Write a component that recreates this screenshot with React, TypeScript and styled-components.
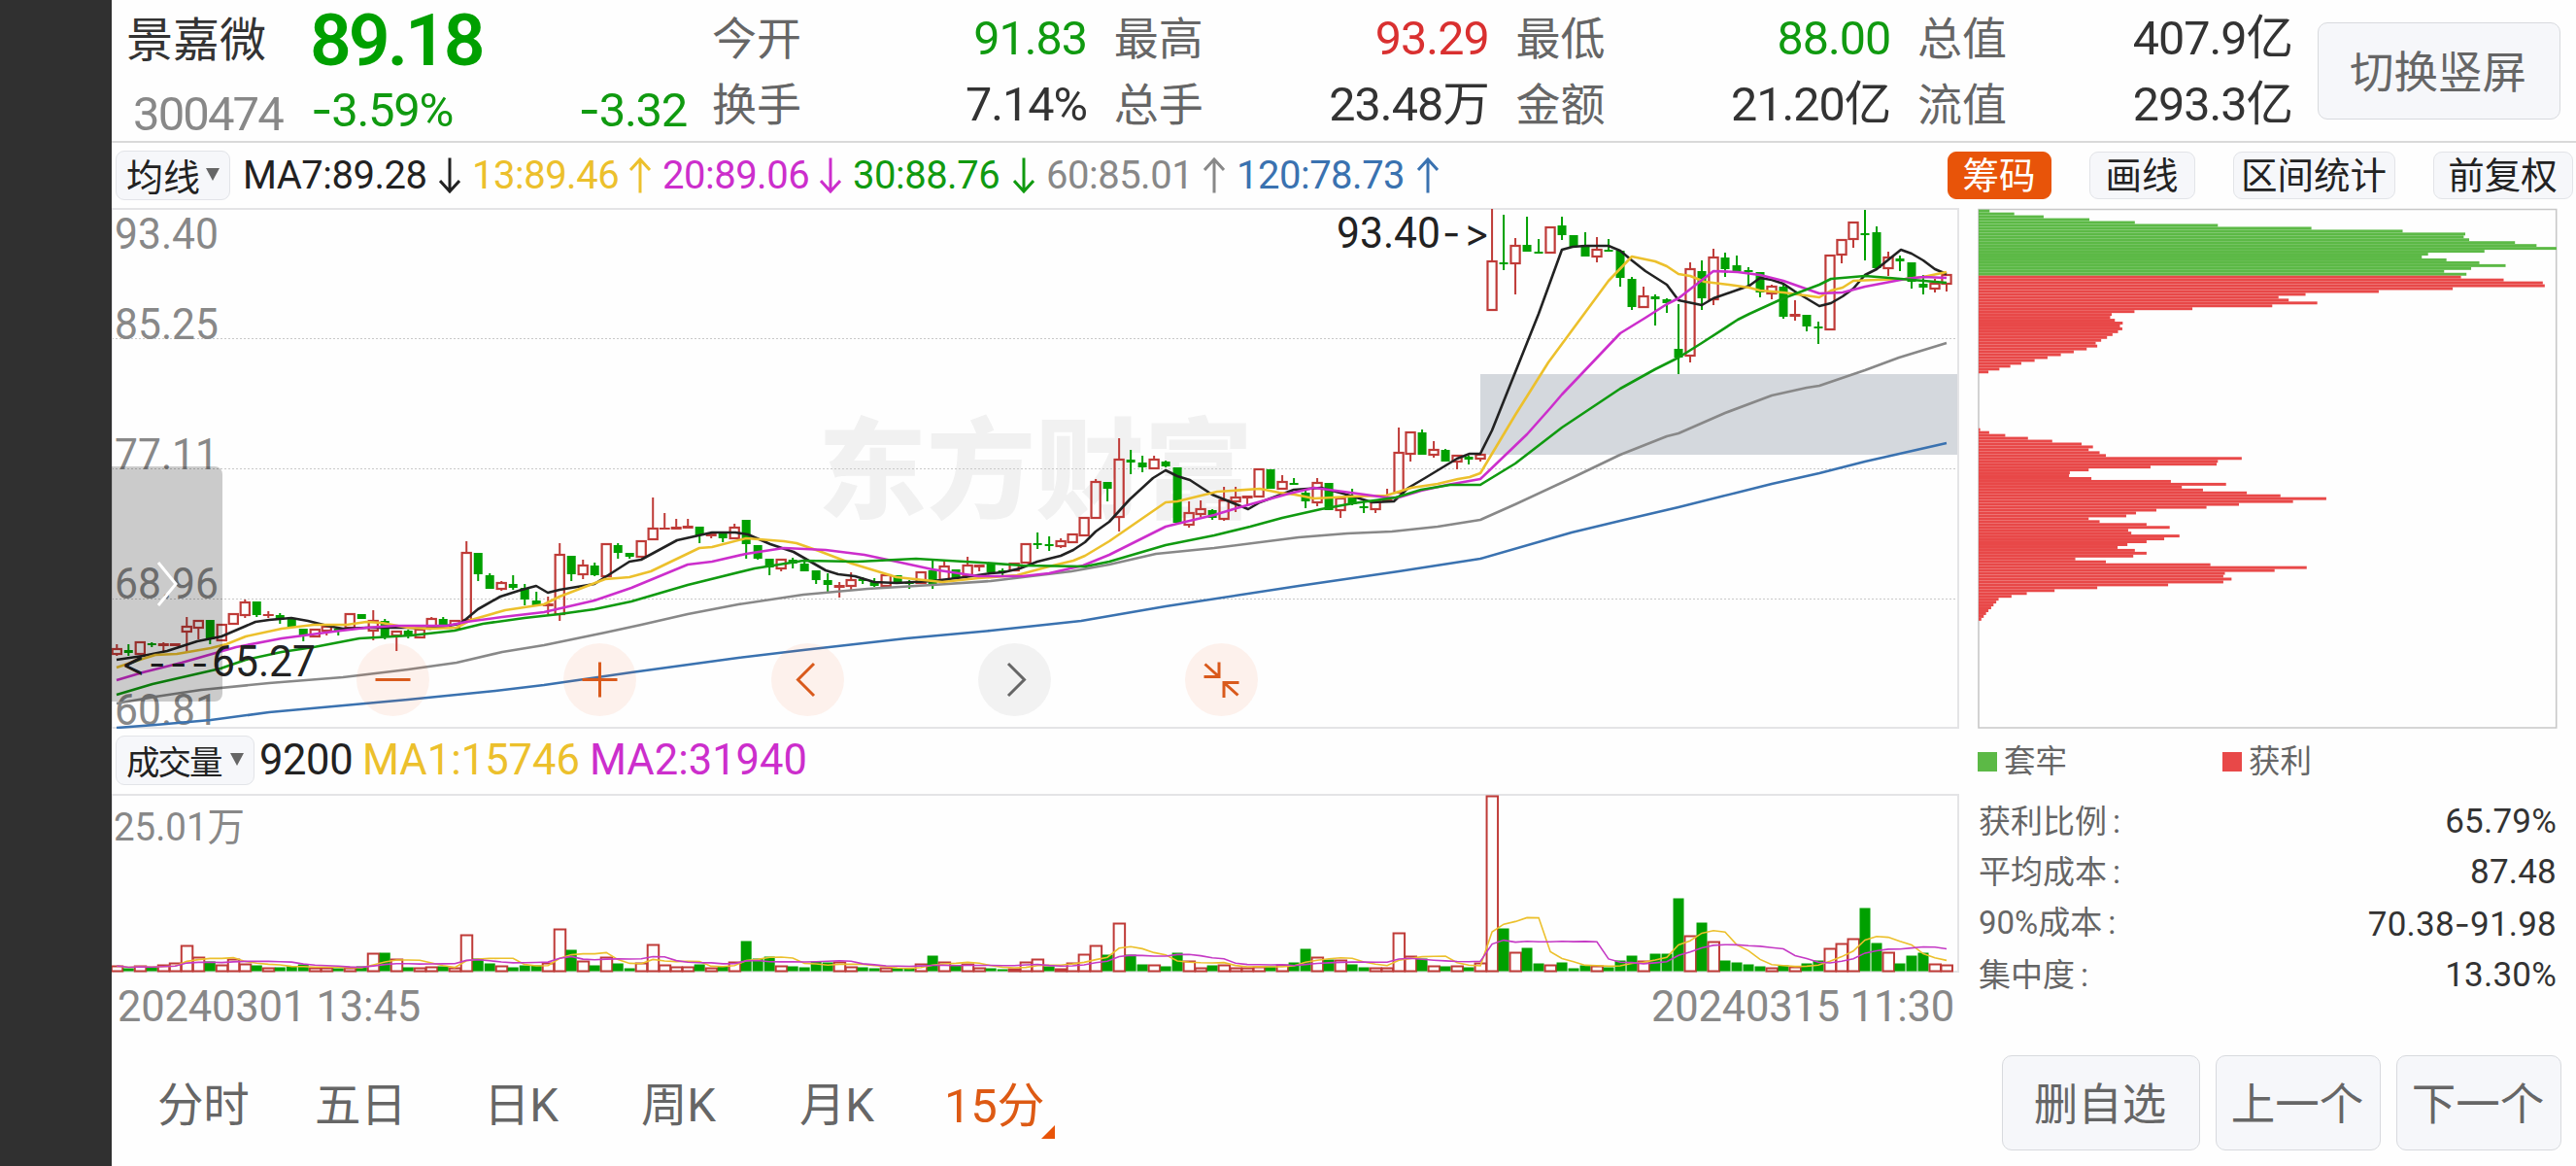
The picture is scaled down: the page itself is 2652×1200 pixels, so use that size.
import React from "react";
import styled, { createGlobalStyle } from "styled-components";

const C = {
  ink: "#222222",
  text: "#333333",
  label: "#666666",
  muted: "#888888",
  up: "#d93030",
  down: "#109a10",
  green: "#00a000",
  red: "#bf3b38",
  yellow: "#ecc02c",
  magenta: "#cc2ecc",
  gray: "#888888",
  blue: "#3a72b0",
  orange: "#e85409",
  chipGreen: "#5cb946",
  chipRed: "#e84848",
  panel: "#f6f7fa",
  line: "#e4e4e6",
};

const Global = createGlobalStyle`
  * { box-sizing: border-box; }
  body { margin: 0; background: #fefefe; }
  button { font: inherit; color: inherit; cursor: pointer; }
`;

const Screen = styled.div`
  display: flex;
  width: 2652px;
  height: 1200px;
  overflow: hidden;
  background: #fefefe;
  color: ${C.text};
  font-family: Roboto, "Noto Sans CJK SC", sans-serif;
  white-space: nowrap;
`;
const Rail = styled.div`
  flex: 0 0 115px;
  background: #303030;
`;
const Main = styled.main`
  flex: 1;
  min-width: 0;
  display: flex;
  flex-direction: column;
`;

/* quote header */
const Header = styled.header`
  display: flex;
  height: 147px;
  padding: 6px 0 0 15px;
  border-bottom: 2px solid #d9d9d9;
`;
const NameCol = styled.div`
  width: 189px;
`;
const StockName = styled.div`
  font-size: 48px;
  line-height: 71px;
`;
const Code = styled.div`
  padding-left: 7px;
  font-size: 49px;
  line-height: 81px;
  letter-spacing: -1.9px;
  color: ${C.muted};
`;
const PriceCol = styled.div`
  width: 388px;
  margin-right: 26px;
  color: ${C.down};
`;
const Price = styled.div`
  height: 71px;
  font-size: 75px;
  font-weight: 600;
  line-height: 71px;
  letter-spacing: -3px;
  color: ${C.green};
`;
const Change = styled.div`
  display: flex;
  justify-content: space-between;
  padding-left: 1px;
  font-size: 49px;
  line-height: 72px;
  letter-spacing: -1.3px;
`;
const StatGrid = styled.div`
  display: grid;
  grid-template-columns: repeat(4, 386px);
  grid-auto-rows: 68px;
  column-gap: 27.7px;
`;
const Stat = styled.div`
  display: flex;
  justify-content: space-between;
  line-height: 68px;
`;
const StatLabel = styled.span`
  font-size: 46px;
  color: ${C.label};
`;
const StatValue = styled.span<{ $c?: string }>`
  font-size: 48.5px;
  letter-spacing: -1px;
  color: ${(p) => p.$c ?? C.text};
`;
const PanelButton = styled.button<{ $w: number; $h: number }>`
  width: ${(p) => p.$w}px;
  height: ${(p) => p.$h}px;
  padding: 0 2px 4px 0;
  border: 1.5px solid #d8dade;
  border-radius: 10px;
  background: ${C.panel};
  color: ${C.label};
  font-size: 45.5px;
`;
const RotateSlot = styled.div`
  padding: 17px 0 0 26px;
`;

/* indicator bars */
const Bar = styled.div<{ $h: number; $size: number; $lift?: number }>`
  display: flex;
  align-items: center;
  height: ${(p) => p.$h}px;
  padding: 0 0 ${(p) => p.$lift ?? 0}px 4px;
  font-size: ${(p) => p.$size}px;
`;
const Picker = styled.button<{ $w: number; $size: number; $ls?: number }>`
  display: flex;
  align-items: center;
  justify-content: space-between;
  width: ${(p) => p.$w}px;
  height: 51px;
  padding: 0 10px 2px;
  border: 1.5px solid #e2e4e8;
  border-radius: 9px;
  background: ${C.panel};
  color: ${C.ink};
  font-size: ${(p) => p.$size}px;
  letter-spacing: ${(p) => p.$ls ?? 0}px;
`;
const Caret = styled.i`
  border: 7.5px solid transparent;
  border-top: 13px solid ${C.label};
  border-bottom: 0;
`;
const Indicator = styled.div<{ $w: number; $c: string; $ls: number }>`
  display: flex;
  align-items: center;
  justify-content: space-between;
  width: ${(p) => p.$w}px;
  color: ${(p) => p.$c};
  letter-spacing: ${(p) => p.$ls}px;
`;
const Indicators = styled.div<{ $gap: number; $ml: number }>`
  display: flex;
  gap: ${(p) => p.$gap}px;
  margin-left: ${(p) => p.$ml}px;
`;
const Tools = styled.div`
  display: flex;
  gap: 39px;
  margin: 0 3px 0 auto;
`;
const Tool = styled.button<{ $w: number; $on?: boolean }>`
  width: ${(p) => p.$w}px;
  height: 49px;
  padding: 0 1px 0 0;
  border: 1.5px solid ${(p) => (p.$on ? C.orange : "#e2e4e8")};
  border-radius: 9px;
  background: ${(p) => (p.$on ? C.orange : C.panel)};
  color: ${(p) => (p.$on ? "#fff" : C.ink)};
  font-size: 37.5px;
  line-height: 42px;
`;

/* body */
const Body = styled.div`
  display: flex;
  height: 854px;
`;
const Charts = styled.section`
  width: 1902px;
`;
const ChartBox = styled.div`
  position: relative;
  height: 536px;
`;
const Canvas = styled.svg`
  display: block;
  text {
    font-family: Roboto, "Noto Sans CJK SC", sans-serif;
  }
`;
const Controls = styled.div`
  position: absolute;
  left: 252px;
  bottom: 13px;
  display: flex;
  gap: 138.3px;
`;
const Round = styled.button<{ $off?: boolean }>`
  width: 75px;
  height: 75px;
  padding: 0;
  border: 0;
  border-radius: 50%;
  background: ${(p) => (p.$off ? "rgba(120,120,120,.09)" : "rgba(240,90,20,.08)")};
  color: ${(p) => (p.$off ? "#666" : "#d95a1c")};
  svg {
    display: block;
  }
`;
const Dates = styled.div`
  display: flex;
  justify-content: space-between;
  padding: 0 5px 0 6px;
  font-size: 43.5px;
  line-height: 69px;
  letter-spacing: -0.2px;
  color: ${C.muted};
`;

/* chip distribution side panel */
const Side = styled.aside`
  width: 600px;
  margin-left: 18px;
`;
const Legend = styled.div`
  display: grid;
  grid-template-columns: 252px 1fr;
  height: 68px;
  padding-left: 1px;
  font-size: 32.5px;
  line-height: 63px;
  color: ${C.label};
`;
const LegendItem = styled.div<{ $c: string }>`
  display: flex;
  align-items: center;
  gap: 7px;
  &::before {
    content: "";
    width: 20px;
    height: 20px;
    background: ${(p) => p.$c};
  }
`;
const Row = styled.div`
  display: flex;
  justify-content: space-between;
  padding: 0 3px 0 2px;
  font-size: 33px;
  line-height: 52px;
  color: ${C.label};
`;
const Rows = styled.div`
  padding-top: 2px;
`;
const RowValue = styled.span`
  color: ${C.text};
  font-size: 35px;
  letter-spacing: 0.2px;
`;
const Colon = styled.span`
  margin-left: 6px;
`;
const Dash = styled.span`
  font-family: Inter, sans-serif;
`;

/* footer */
const Footer = styled.footer`
  flex: 1;
  display: flex;
  justify-content: space-between;
  padding: 18px 15px 0 47px;
`;
const Tabs = styled.nav`
  display: flex;
  height: 94px;
  align-items: center;
`;
const Tab = styled.button<{ $w: number; $on?: boolean }>`
  position: relative;
  width: ${(p) => p.$w}px;
  padding: 0;
  border: 0;
  background: none;
  text-align: left;
  font-size: ${(p) => (p.$on ? 49 : 47.5)}px;
  letter-spacing: -0.3px;
  color: ${(p) => (p.$on ? "#dd5a14" : C.label)};
`;
const Corner = styled.i`
  position: absolute;
  left: 100px;
  bottom: -3px;
  border: 7.5px solid ${C.orange};
  border-top-color: transparent;
  border-left-color: transparent;
`;
const Actions = styled.div`
  display: flex;
  gap: 16px;
`;

/* [direction, high, bodyTop, bodyBottom, low, volumeTop] for each 15-minute bar */
type K = [string, number, number, number, number, number];
const K_DATA = `
r 663 668 673 675 994|g 663 669 672 675 997|r 660 661 673 674 994|g 661 662 664 666 996|r 661 662 665 670 993|r 662 662 665 665 991
r 635 645 650 671 973|r 638 639 646 658 985|g 638 638 658 663 990|r 642 643 659 660 993|r 631 632 642 643 987|r 617 620 633 636 992
g 619 619 633 635 994|r 629 632 634 636 996|g 631 633 637 642 996|g 637 637 645 645 995|g 647 647 654 660 993|r 648 648 655 656 996
r 643 645 649 654 996|g 646 647 649 654 997|r 631 632 646 647 996|g 632 632 637 637 995|r 628 639 649 659 981|g 637 639 656 658 981
r 649 650 654 670 987|g 648 649 655 657 996|r 648 648 656 656 996|r 635 637 646 648 995|g 635 637 643 644 995|r 639 639 646 646 996
r 557 569 638 639 962|g 569 569 591 598 987|g 590 592 606 606 992|r 598 600 606 608 994|g 592 601 605 607 996|g 601 605 617 623 994
g 609 618 623 624 994|r 614 621 624 632 991|r 559 571 632 639 956|g 572 572 591 598 978|r 576 582 591 596 989|g 579 582 592 593 994
r 560 560 593 593 985|g 559 561 569 575 992|g 569 569 573 575 997|r 557 557 573 573 991|r 512 544 555 555 972|r 528 543 545 545 993
r 534 542 545 545 995|r 534 541 544 544 995|g 542 542 551 559 993|r 549 549 552 554 996|g 549 549 554 558 995|r 539 543 554 555 990
g 535 535 560 575 969|g 561 561 575 576 987|g 575 575 584 592 985|r 576 576 585 588 994|g 574 576 580 585 995|g 577 580 588 588 996
g 587 587 597 601 990|g 590 597 602 609 991|r 599 602 605 615 990|r 589 597 603 607 995|g 594 596 598 601 996|g 595 599 603 604 997
r 592 592 603 606 996|g 592 592 600 600 997|g 597 599 601 606 997|r 589 589 600 601 992|g 577 587 602 606 984|r 577 583 597 598 990
g 586 586 595 595 994|r 573 582 592 592 992|r 581 581 584 588 996|g 580 580 589 589 997|g 585 587 589 592 998|r 580 580 587 587 997
r 560 560 579 579 990|g 548 559 561 565 987|g 552 560 562 567 995|r 554 557 562 564 997|r 550 550 558 559 991|r 533 533 551 551 982
r 493 496 533 533 973|g 496 496 503 516 983|r 451 473 532 547 950|g 463 473 476 488 983|g 469 476 481 486 993|r 469 473 482 483 993
g 474 475 480 481 995|g 481 481 538 538 981|r 516 528 540 543 989|r 515 524 529 532 996|g 524 525 533 535 994|r 501 515 534 536 993
r 501 512 516 527 996|r 510 510 513 519 996|r 483 483 511 512 995|g 483 483 503 503 995|r 489 496 503 504 993|g 492 497 499 499 991
g 502 507 516 523 977|r 492 497 517 521 985|g 497 497 525 525 988|r 511 513 525 533 988|g 503 511 519 520 993|g 514 521 523 528 996
r 516 516 524 528 996|r 503 514 517 517 996|r 440 466 507 507 960|r 445 445 467 475 984|g 442 445 468 468 987|r 454 463 468 471 994
g 462 463 475 475 995|r 468 469 475 483 994|g 469 470 473 478 996|r 468 468 472 475 991|r 215 269 319 319 819|g 221 270 271 278 956
r 245 253 271 303 980|g 223 252 259 259 976|g 246 259 260 260 992|r 234 234 260 260 993|g 223 232 242 247 991|g 242 242 254 255 997
g 239 253 264 264 994|r 244 257 264 270 994|g 246 257 258 258 996|g 258 258 286 295 989|g 285 287 316 319 984|r 295 305 316 317 989
g 303 305 308 335 982|g 307 308 312 322 982|g 313 359 368 385 925|r 270 277 366 373 963|g 268 279 307 319 950|r 256 265 308 314 969
g 260 265 277 285 989|g 263 273 279 279 991|g 275 278 280 295 993|g 280 280 301 306 995|r 293 295 302 308 996|g 291 295 326 328 994
r 309 323 326 330 995|g 324 324 336 341 992|g 331 336 338 354 989|r 263 263 339 339 976|r 247 247 262 271 971|r 229 229 246 255 966
g 216 240 241 268 935|g 233 239 276 276 971|r 259 265 276 284 980|g 263 266 269 279 992|g 270 270 290 297 984|g 283 292 296 303 981
r 287 292 297 301 992|r 283 283 292 300 993`;
const bars: K[] = K_DATA.trim()
  .split(/[|\n]/)
  .map((s) => {
    const [d, ...n] = s.trim().split(" ");
    return [d, ...n.map(Number)] as K;
  });
const cx = (i: number) => 120.3 + 11.998 * i;
const BASE = 1000;

const movingAverage = (n: number) =>
  bars
    .map((_, i) => {
      const win = bars.slice(Math.max(0, i - n + 1), i + 1);
      const h = win.reduce((s, b) => s + (BASE - b[5]), 0) / win.length;
      return `${cx(i).toFixed(1)},${(BASE - h).toFixed(1)}`;
    })
    .join(" ");

const MA_LINES: [string, string][] = [
  [C.blue, "120,749 160,746 217,741 277,733 420,720 510,711 560,705 650,692 760,677 827,669 933,657 1020,649 1113,639 1200,624 1337,603 1440,588 1524,575 1618,548 1668,536 1728,522 1824,498 1873,487 1920,475 2004,456"],
  [C.gray, "120,724 160,717 207,710 277,703 353,697 420,689 470,682 517,671 560,664 623,651 660,643 708,632 760,622 827,612 893,606 960,602 1020,598 1103,588 1142,581 1190,570 1250,564 1337,553 1387,549 1433,547 1480,542 1524,535 1560,519 1618,492 1668,468 1716,449 1728,446 1776,425 1824,407 1860,399 1873,397 1920,381 1955,368 2004,353"],
  [C.ink, "120,679 147,675 172,670 203,660 228,655 263,640 277,638 288,637 300,636 317,639 337,644 353,647 377,646 420,646 443,647 473,642 480,637 492,627 515,614 537,607 552,603 564,610 576,607 612,601 648,578 660,576 697,556 733,548 757,548 770,550 793,560 817,568 850,587 863,591 880,593 900,599 923,600 960,598 993,594 1020,590 1033,589 1050,585 1068,578 1092,572 1105,566 1117,558 1128,547 1142,537 1163,514 1187,492 1200,484 1212,490 1225,494 1248,509 1285,524 1297,517 1332,504 1360,502 1383,508 1413,517 1435,516 1450,502 1467,492 1500,472 1513,467 1524,467 1536,443 1584,323 1608,257 1619,254 1632,253 1656,253 1668,258 1680,268 1694,279 1716,293 1728,309 1752,314 1764,307 1801,294 1812,286 1824,288 1836,292 1848,300 1873,315 1885,312 1897,305 1908,297 1920,283 1932,277 1957,257 1968,261 1980,268 1992,277 2004,282"],
  [C.yellow, "120,687 147,678 160,674 182,673 217,667 233,663 253,655 290,647 323,643 357,643 377,640 393,641 420,646 443,647 470,646 485,638 520,628 560,622 576,614 623,596 648,594 670,588 720,564 733,563 768,554 807,557 820,559 843,567 877,580 923,594 970,599 1007,595 1047,592 1080,583 1105,577 1117,572 1142,557 1200,517 1212,516 1253,506 1297,503 1317,507 1333,509 1353,513 1390,511 1427,510 1453,502 1480,498 1501,493 1513,491 1524,487 1536,467 1560,427 1594,373 1656,289 1680,264 1704,269 1716,274 1728,282 1740,284 1755,290 1780,293 1801,296 1812,299 1836,301 1873,306 1885,299 1897,296 1908,289 1932,288 1962,287 1980,285 2004,280"],
  [C.magenta, "120,700 147,692 187,682 243,666 290,657 343,650 377,646 407,644 460,644 480,640 517,635 560,630 612,618 650,605 708,581 733,578 768,570 807,564 850,566 890,571 923,578 960,586 1007,593 1053,593 1080,590 1115,582 1142,571 1200,542 1212,539 1250,530 1273,523 1327,508 1353,502 1383,506 1427,512 1440,512 1463,505 1490,499 1524,493 1572,447 1596,420 1608,406 1668,343 1694,327 1716,313 1728,307 1764,279 1789,280 1812,283 1836,289 1873,302 1897,301 1920,295 1962,287 1980,285 2004,286"],
  [C.down, "120,715 157,704 227,688 253,679 290,671 323,666 370,657 423,654 468,649 497,642 540,636 576,632 612,627 650,619 708,602 777,585 827,577 883,578 943,575 1010,579 1053,582 1117,583 1142,578 1200,561 1250,551 1287,542 1320,533 1360,524 1393,518 1437,512 1463,504 1493,499 1524,499 1560,477 1608,440 1668,400 1704,380 1728,368 1752,353 1789,329 1801,323 1836,307 1873,293 1885,287 1920,284 1945,286 2004,291"],
];

const CHIP_GREEN = [70, 133, 208, 325, 441, 653, 892, 1125, 1285, 1281, 1295, 1412, 1467, 1518, 1334, 1190, 1174, 1237, 1321, 1388, 1300, 1231, 1288];
const CHIP_RED = [1274, 1383, 1483, 1488, 1253, 1064, 877, 808, 834, 907, 792, 588, 440, 382, 378, 390, 410, 403, 409, 398, 384, 370, 355, 341, 345, 318, 285, 252, 218, 185, 151, 123, 95, 67];
const CHIP_LOW = [46, 69, 110, 168, 230, 305, 334, 323, 351, 367, 714, 653, 650, 481, 323, 275, 273, 330, 533, 674, 561, 615, 727, 813, 930, 845, 707, 624, 496, 444, 419, 323, 351, 471, 530, 424, 432, 555, 516, 471, 422, 397, 441, 471, 437, 289, 367, 634, 880, 798, 671, 667, 688, 667, 526, 345, 236, 165, 126, 93, 87, 80, 74, 67, 61, 55, 49];
const CHIP_ORIGIN = 42;
const CHIP_SCALE = 2.481;

function ChipRows({ rows, start, fill }: { rows: number[]; start: number; fill: string }) {
  return (
    <g fill={fill}>
      {rows.map((v, k) => (
        <rect key={k} x={2037} y={215.7 + (start + k) * 2.957} width={(v - CHIP_ORIGIN) / CHIP_SCALE} height={2.957} />
      ))}
    </g>
  );
}

function Arrow({ up }: { up?: boolean }) {
  return (
    <svg width="22" height="37" viewBox="0 0 22 37" fill="none" stroke="currentColor" strokeWidth="3">
      <path d={up ? "M11 36.5V2M1 13 11 2l10 11" : "M11 .5V35M1 24 11 35l10-11"} />
    </svg>
  );
}

function Candle({ i, k }: { i: number; k: K }) {
  const [d, hi, top, bot, lo] = k;
  const x = cx(i);
  if (d === "g") {
    const thin = bot - top <= 2;
    return (
      <g fill={C.green}>
        <rect x={x - 1} y={hi} width={2} height={Math.max(1, lo - hi)} />
        <rect x={x - 4.5} y={top} width={9} height={thin ? 2 : bot - top} />
      </g>
    );
  }
  return (
    <g fill={C.red}>
      {top > hi && <rect x={x - 1} y={hi} width={2} height={top - hi} />}
      {lo > bot && <rect x={x - 1} y={bot} width={2} height={lo - bot} />}
      {bot - top <= 3 ? (
        <rect x={x - 5.5} y={top} width={11} height={bot - top} />
      ) : (
        <rect x={x - 4.6} y={top} width={9.2} height={bot - top} fill="none" stroke={C.red} strokeWidth={2.2} />
      )}
    </g>
  );
}

function PriceChart() {
  const labels: [string, number][] = [["93.40", 256], ["85.25", 349], ["77.11", 483], ["68.96", 616], ["60.81", 746]];
  return (
    <Canvas width="1902" height="536" viewBox="115 214 1902 536">
      <text x="842" y="525" fontSize="112" fontWeight="900" fill="#f1f1f1">东方财富</text>
      <rect x="1524" y="385" width="492" height="83" fill="#d4d8dd" />
      <g stroke="#c9c9c9" strokeWidth="1" strokeDasharray="2 2">
        <path d="M115 348.500H2016M115 482.500H2016M115 616.500H2016" />
      </g>
      <path d="M115 215H2016V749H115Z" fill="none" stroke={C.line} strokeWidth="2" />
      <g fontSize="44" fill={C.gray}>
        {labels.map(([t, y]) => (
          <text key={t} x="118" y={y} textLength="107" lengthAdjust="spacingAndGlyphs">{t}</text>
        ))}
      </g>
      {bars.map((k, i) => <Candle key={i} i={i} k={k} />)}
      <g fill="none" strokeWidth="2.600" strokeLinejoin="round">
        {MA_LINES.map(([c, p]) => <polyline key={c} points={p} stroke={c} />)}
      </g>
      <g fontSize="44" fill={C.ink}>
        <text y="696">
          <tspan fontFamily="Inter" fontSize="38" x="125 153 175 197">&lt;---</tspan>
          <tspan x="218" textLength="107" lengthAdjust="spacingAndGlyphs">65.27</tspan>
        </text>
        <text y="255">
          <tspan x="1376" textLength="107" lengthAdjust="spacingAndGlyphs">93.40</tspan>
          <tspan fontFamily="Inter" fontSize="40" x="1485 1507" y="254">-&gt;</tspan>
        </text>
      </g>
      <path d="M115 480H221a8 8 0 0 1 8 8V714a8 8 0 0 1-8 8H115Z" fill="rgba(0,0,0,.2)" />
      <path d="M163 579l18 22-18 22" fill="none" stroke="#fff" strokeWidth="3" />
    </Canvas>
  );
}

function VolumeChart() {
  return (
    <Canvas width="1902" height="185" viewBox="115 817 1902 185">
      <path d="M115 818H2016V1000H115Z" fill="none" stroke={C.line} strokeWidth="2" />
      <text x="117" y="865" fontSize="40" fill={C.muted} textLength="135" lengthAdjust="spacingAndGlyphs">25.01万</text>
      {bars.map(([d, , , , , top], i) =>
        d === "g" && i !== 79 ? (
          <rect key={i} x={cx(i) - 5.500} y={top - 0.500} width={11} height={BASE - top} fill={C.green} />
        ) : (
          <rect key={i} x={cx(i) - 5.500} y={top + 0.500} width={11.500} height={Math.max(1, BASE - 1 - top)} fill="none" stroke={C.red} strokeWidth={2} />
        ),
      )}
      <polyline points={movingAverage(5)} fill="none" stroke={C.yellow} strokeWidth="1.600" />
      <polyline points={movingAverage(10)} fill="none" stroke="#c53ac5" strokeWidth="1.600" />
    </Canvas>
  );
}

const ICONS: [string, string, boolean?][] = [
  ["缩小", "M19.500 37.500H55.500"],
  ["放大", "M19.500 37.500H55.500M37.500 19.500V55.500"],
  ["左移", "M44 21 27.500 37.500 44 54"],
  ["右移", "M31 21 47.500 37.500 31 54", true],
  ["收起", "M20.500 21.500 35 34.500M35 19.500V34.500H19.500M40 40.500 54.500 53.500M40 56V40.500H55.500"],
];

const STATS: [string, string, string?][] = [
  ["今开", "91.83", C.down], ["最高", "93.29", C.up], ["最低", "88.00", C.down], ["总值", "407.9亿"],
  ["换手", "7.14%"], ["总手", "23.48万"], ["金额", "21.20亿"], ["流值", "293.3亿"],
];
const MAS: [string, string, number, boolean][] = [
  ["MA7:89.28", C.ink, 224, false],
  ["13:89.46", C.yellow, 184, true],
  ["20:89.06", C.magenta, 184, false],
  ["30:88.76", C.down, 187, false],
  ["60:85.01", C.gray, 184, true],
  ["120:78.73", C.blue, 208, true],
];
const CHIP_STATS: [string, string][] = [
  ["获利比例", "65.79%"], ["平均成本", "87.48"], ["90%成本", "70.38-91.98"], ["集中度", "13.30%"],
];
const TABS: [string, number][] = [["分时", 162], ["五日", 174], ["日K", 162], ["周K", 163], ["月K", 149], ["15分", 125]];

/* numbers whose minus sign or range dash is drawn full width */
function Figure({ value }: { value: string }) {
  const parts = value.split("-");
  return (
    <>
      {parts.map((p, i) => (
        <React.Fragment key={i}>{i > 0 && <Dash>-</Dash>}{p}</React.Fragment>
      ))}
    </>
  );
}

export default function App() {
  return (
    <Screen>
      <Global />
      <Rail />
      <Main>
        <Header>
          <NameCol>
            <StockName>景嘉微</StockName>
            <Code>300474</Code>
          </NameCol>
          <PriceCol>
            <Price>89.18</Price>
            <Change>
              <span><Figure value="-3.59%" /></span>
              <span><Figure value="-3.32" /></span>
            </Change>
          </PriceCol>
          <StatGrid>
            {STATS.map(([l, v, c]) => (
              <Stat key={l}>
                <StatLabel>{l}</StatLabel>
                <StatValue $c={c}>{v}</StatValue>
              </Stat>
            ))}
          </StatGrid>
          <RotateSlot><PanelButton $w={250} $h={100}>切换竖屏</PanelButton></RotateSlot>
        </Header>

        <Bar $h={67} $size={40}>
          <Picker $w={118} $size={38}>均线<Caret /></Picker>
          <Indicators $gap={12} $ml={13}>
            {MAS.map(([t, c, w, up]) => (
              <Indicator key={t} $c={c} $w={w} $ls={-0.5}>{t}<Arrow up={up} /></Indicator>
            ))}
          </Indicators>
          <Tools>
            <Tool $w={107} $on>筹码</Tool>
            <Tool $w={109}>画线</Tool>
            <Tool $w={167}>区间统计</Tool>
            <Tool $w={144}>前复权</Tool>
          </Tools>
        </Bar>

        <Body>
          <Charts>
            <ChartBox>
              <PriceChart />
              <Controls>
                {ICONS.map(([name, d, off]) => (
                  <Round key={name} $off={off} aria-label={name}>
                    <svg width="75" height="75" fill="none" stroke="currentColor" strokeWidth="3"><path d={d} /></svg>
                  </Round>
                ))}
              </Controls>
            </ChartBox>
            <Bar $h={67} $size={43.5} $lift={2}>
              <Picker $w={143} $size={34.5} $ls={-2}>成交量<Caret /></Picker>
              <Indicators $gap={10} $ml={5}>
                <Indicator $w={96} $c={C.ink} $ls={-0.4}>9200</Indicator>
                <Indicator $w={224} $c={C.yellow} $ls={0}>MA1:15746</Indicator>
                <Indicator $w={224} $c={C.magenta} $ls={0}>MA2:31940</Indicator>
              </Indicators>
            </Bar>
            <VolumeChart />
            <Dates><span>20240301 13:45</span><span>20240315 11:30</span></Dates>
          </Charts>

          <Side>
            <Canvas width="600" height="536" viewBox="2035 214 600 536">
              <path d="M2037 215.500H2631.700V749H2037Z" fill="none" stroke="#c8c8c8" strokeWidth="1.600" />
              <ChipRows rows={CHIP_GREEN} start={0} fill={C.chipGreen} />
              <ChipRows rows={CHIP_RED} start={23} fill={C.chipRed} />
              <ChipRows rows={CHIP_LOW} start={76.1} fill={C.chipRed} />
            </Canvas>
            <Legend>
              <LegendItem $c={C.chipGreen}>套牢</LegendItem>
              <LegendItem $c={C.chipRed}>获利</LegendItem>
            </Legend>
            <Rows>
              {CHIP_STATS.map(([l, v]) => (
                <Row key={l}>
                  <span>{l}<Colon>:</Colon></span>
                  <RowValue><Figure value={v} /></RowValue>
                </Row>
              ))}
            </Rows>
          </Side>
        </Body>

        <Footer>
          <Tabs>
            {TABS.map(([t, w], i) => (
              <Tab key={t} $w={w} $on={i === 5}>{t}{i === 5 && <Corner />}</Tab>
            ))}
          </Tabs>
          <Actions>
            <PanelButton $w={204} $h={98}>删自选</PanelButton>
            <PanelButton $w={170} $h={98}>上一个</PanelButton>
            <PanelButton $w={170} $h={98}>下一个</PanelButton>
          </Actions>
        </Footer>
      </Main>
    </Screen>
  );
}
